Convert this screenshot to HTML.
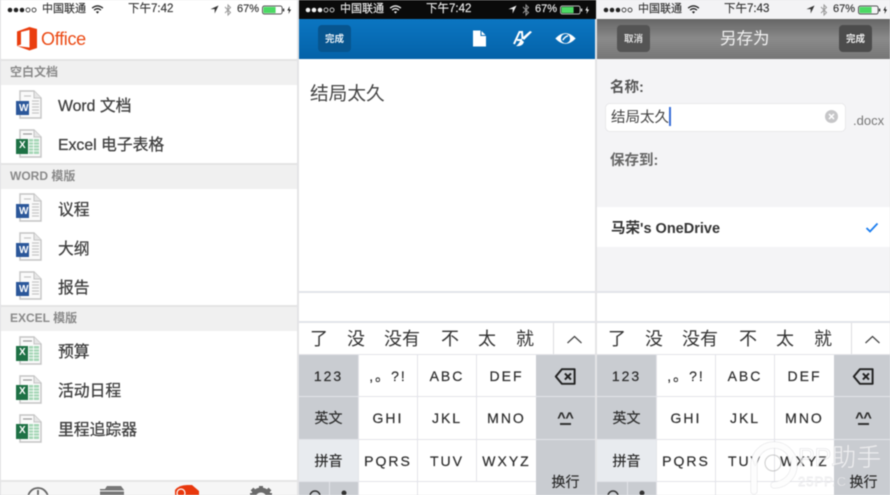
<!DOCTYPE html>
<html><head><meta charset="utf-8">
<style>
html,body{margin:0;padding:0;background:#e4e4e6}
body{width:890px;height:495px;overflow:hidden;position:relative}
#r{position:absolute;left:0;top:0;width:890px;height:495px;overflow:hidden;filter:blur(.45px);font-family:"Liberation Sans","Noto Sans CJK SC",sans-serif;color:#3c3c3c}
#r div,#r span.a,#r svg.a{position:absolute}
.t{white-space:nowrap;line-height:1}
.sec{left:1px;width:296px;height:24px;background:#f0f0f0;border-top:2px solid #e4e4e4}
.sl{left:10px;font-size:12px;color:#8a8a8a;font-weight:bold}
.it{left:58px;font-size:15.8px;color:#3e3e3e;-webkit-text-stroke:.25px #3e3e3e}
.k{background:#fff;text-align:center;font-size:14px;color:#2c2c2c;letter-spacing:2px;white-space:nowrap;-webkit-text-stroke:.2px #2c2c2c}
.g{background:#c9ccd1}
.c{top:330px;font-size:18px;color:#333;line-height:1;white-space:nowrap}
.st{font-size:11px;line-height:1;white-space:nowrap;color:#333;-webkit-text-stroke:.15px currentColor}
.btn{border-radius:4px;font-size:9.5px;font-weight:bold;text-align:center;line-height:29px;white-space:nowrap}
</style></head><body><div id="r">

<svg width="0" height="0" style="position:absolute"><defs>
<symbol id="wd" viewBox="0 0 27 30">
<path d="M4 1H18L25 8V28H4Z" fill="#fafafa" stroke="#c4c4c4" stroke-width="1.4"/><path d="M18 1V8H25" fill="#e6e6e6" stroke="#c4c4c4"/>
<path d="M16 11h7M16 14h7M16 17h7M16 20h7M16 23h7M8 6h7" stroke="#c8c8c8" stroke-width="1.2"/>
<rect x="0" y="11" width="13" height="14" fill="#2b579a"/>
</symbol>
<symbol id="xl" viewBox="0 0 27 30">
<path d="M4 1H18L25 8V28H4Z" fill="#fafafa" stroke="#c4c4c4" stroke-width="1.4"/><path d="M18 1V8H25" fill="#e6e6e6" stroke="#c4c4c4"/>
<path d="M7 5h9" stroke="#999" stroke-width="1.2"/>
<path d="M13 10h10v15h-10z" fill="#a5d6b6"/><path d="M13 13h10M13 16h10M13 19h10M13 22h10M17.5 10v15" stroke="#fff" stroke-width=".8"/>
<rect x="0" y="10" width="12" height="15" fill="#1e7145"/>
</symbol>
<symbol id="sig" viewBox="0 0 30 10"><circle cx="3" cy="5" r="2.3" fill="currentColor"/><circle cx="9" cy="5" r="2.3" fill="currentColor"/><circle cx="15" cy="5" r="2.3" fill="currentColor"/><circle cx="21" cy="5" r="2" fill="none" stroke="currentColor" stroke-width=".8"/><circle cx="27" cy="5" r="2" fill="none" stroke="currentColor" stroke-width=".8"/></symbol>
<symbol id="wifi" viewBox="0 0 14 10"><path d="M1 3.5Q7-1.5 13 3.5M3.2 5.7Q7 2.6 10.8 5.7" fill="none" stroke="currentColor" stroke-width="1.5"/><path d="M5.3 7.6Q7 6.2 8.7 7.6L7 9.6Z" fill="currentColor"/></symbol>
<symbol id="loc" viewBox="0 0 10 10"><path d="M9.5.5L.5 4.6H5.2V9.4Z" fill="currentColor"/></symbol>
<symbol id="bt" viewBox="0 0 8 12"><path d="M1 3L6.5 8.5 4 11V1L6.5 3.5 1 9" fill="none" stroke="#999" stroke-width="1"/></symbol>
<symbol id="bat" viewBox="0 0 32 10"><rect x=".5" y=".7" width="21" height="8.6" rx="2" fill="none" stroke="currentColor" stroke-width=".8"/><rect x="1.5" y="1.7" width="13" height="6.6" fill="#4cd964"/><rect x="22.3" y="3.5" width="1.4" height="3" fill="currentColor"/><path d="M29.5.8L27 5.5H28.8L28.2 9.2 31 4.4H29.2Z" fill="currentColor"/></symbol>
<symbol id="cb" viewBox="0 0 18 14"><path d="M6 1H16.5V13H6L1 7Z" fill="none" stroke="#222" stroke-width="1.6" stroke-linejoin="round"/><path d="M8.5 4.5L13.5 9.5M13.5 4.5L8.5 9.5" stroke="#222" stroke-width="1.6"/></symbol>
</defs></svg>

<!-- Panel 1 -->
<div style="left:1px;top:0;width:296px;height:495px;background:#fff"></div>
<svg class="a" style="left:7px;top:5px;color:#222" width="30" height="10"><use href="#sig"/></svg>
<div class="st t" style="left:42px;top:4px">中国联通</div>
<svg class="a" style="left:91px;top:5px;color:#222" width="13" height="9"><use href="#wifi"/></svg>
<div class="st t" style="left:128px;top:4px;font-size:11.5px">下午7:42</div>
<svg class="a" style="left:210px;top:5px;color:#333" width="9" height="9"><use href="#loc"/></svg>
<svg class="a" style="left:224px;top:4px" width="8" height="12"><use href="#bt"/></svg>
<div class="st t" style="left:237px;top:4px">67%</div>
<svg class="a" style="left:262px;top:5px;color:#222" width="30" height="10"><use href="#bat"/></svg>
<svg class="a" style="left:16px;top:26px" width="22" height="25" viewBox="0 0 22 25"><path d="M1 5.5L13.5 1 21 3V22L13.5 24.5 1 20V5.5ZM13.5 4L5 6V18.5L1 20 13.5 21.5Z" fill="#ea3e0f" fill-rule="evenodd"/><path d="M5 6L13.5 4V21.5L5 18.5Z" fill="#fff"/></svg>
<div class="t" style="left:41px;top:30px;font-size:18px;color:#eb4a14;letter-spacing:-.3px">Office</div>

<div class="sec" style="top:59px"></div><div class="t sl" style="top:66px">空白文档</div>
<svg class="a" style="left:16px;top:90px" width="27" height="30"><use href="#wd"/></svg>
<div class="t" style="left:19px;top:104px;font-size:10px;font-weight:bold;color:#fff">W</div>
<div class="t it" style="top:99px">Word 文档</div>
<svg class="a" style="left:16px;top:129px" width="27" height="30"><use href="#xl"/></svg>
<div class="t" style="left:19px;top:141px;font-size:10px;font-weight:bold;color:#fff">X</div>
<div class="t it" style="top:138px">Excel 电子表格</div>

<div class="sec" style="top:163px"></div><div class="t sl" style="top:170px">WORD 模版</div>
<svg class="a" style="left:16px;top:193px" width="27" height="30"><use href="#wd"/></svg>
<div class="t" style="left:19px;top:207px;font-size:10px;font-weight:bold;color:#fff">W</div>
<div class="t it" style="top:203px">议程</div>
<svg class="a" style="left:16px;top:232px" width="27" height="30"><use href="#wd"/></svg>
<div class="t" style="left:19px;top:246px;font-size:10px;font-weight:bold;color:#fff">W</div>
<div class="t it" style="top:242px">大纲</div>
<svg class="a" style="left:16px;top:271px" width="27" height="30"><use href="#wd"/></svg>
<div class="t" style="left:19px;top:285px;font-size:10px;font-weight:bold;color:#fff">W</div>
<div class="t it" style="top:281px">报告</div>

<div class="sec" style="top:305px"></div><div class="t sl" style="top:312px">EXCEL 模版</div>
<svg class="a" style="left:16px;top:336px" width="27" height="30"><use href="#xl"/></svg>
<div class="t" style="left:19px;top:348px;font-size:10px;font-weight:bold;color:#fff">X</div>
<div class="t it" style="top:345px">预算</div>
<svg class="a" style="left:16px;top:375px" width="27" height="30"><use href="#xl"/></svg>
<div class="t" style="left:19px;top:387px;font-size:10px;font-weight:bold;color:#fff">X</div>
<div class="t it" style="top:384px">活动日程</div>
<svg class="a" style="left:16px;top:414px" width="27" height="30"><use href="#xl"/></svg>
<div class="t" style="left:19px;top:426px;font-size:10px;font-weight:bold;color:#fff">X</div>
<div class="t it" style="top:423px">里程追踪器</div>

<div style="left:1px;top:480px;width:296px;height:15px;background:#f6f6f6;border-top:2px solid #e6e6e6;box-sizing:border-box"></div>
<svg class="a" style="left:0;top:484px" width="297" height="11" viewBox="0 0 297 11">
<circle cx="38" cy="14" r="10" fill="none" stroke="#666" stroke-width="1.8"/><path d="M38 6V14" stroke="#666" stroke-width="1.8"/>
<path d="M100 11V5H105L107 2H121L124 6V11Z" fill="#777"/><path d="M100 7H124" stroke="#f6f6f6"/>
<path d="M175 11V6Q179 1 187 1L192 1 199 7V11Z" fill="#e8380d"/><circle cx="181" cy="9" r="4" fill="#e8380d" stroke="#fff" stroke-width="1.2"/>
<circle cx="261" cy="14" r="8" fill="none" stroke="#6b6b6b" stroke-width="5"/><path d="M261 2V6M252 5L255 8M270 5L267 8M250 11H254M272 11H268" stroke="#6b6b6b" stroke-width="4"/>
</svg>

<!-- Panel 2 -->
<div style="left:299px;top:0;width:297px;height:19px;background:#0a0a0a"></div>
<div style="left:299px;top:19px;width:296px;height:40px;background:linear-gradient(#0b76c2,#0462a8)"></div>
<div style="left:299px;top:59px;width:296px;height:436px;background:#fff"></div>
<svg class="a" style="left:305px;top:5px;color:#f2f2f2" width="30" height="10"><use href="#sig"/></svg>
<div class="st t" style="left:340px;top:4px;color:#eee">中国联通</div>
<svg class="a" style="left:389px;top:5px;color:#eee" width="13" height="9"><use href="#wifi"/></svg>
<div class="st t" style="left:426px;top:4px;font-size:11.5px;color:#eee">下午7:42</div>
<svg class="a" style="left:508px;top:5px;color:#eee" width="9" height="9"><use href="#loc"/></svg>
<svg class="a" style="left:522px;top:4px" width="8" height="12"><use href="#bt"/></svg>
<div class="st t" style="left:535px;top:4px;color:#eee">67%</div>
<svg class="a" style="left:560px;top:5px;color:#eee" width="30" height="10"><use href="#bat"/></svg>
<div class="btn" style="left:318px;top:25px;width:33px;height:27px;background:#07558f;color:#e8f0f6">完成</div>
<svg class="a" style="left:472px;top:30px" width="15" height="17" viewBox="0 0 15 17"><path d="M1 0.5H9L14 5.5V16.5H1Z" fill="#fff"/><path d="M9 .5V5.5H14" fill="none" stroke="#0a6cb5"/></svg>
<svg class="a" style="left:513px;top:30px" width="20" height="17" viewBox="0 0 20 17"><path d="M1 14L6.500 2H9L9.500 9M4 10H9" fill="none" stroke="#fff" stroke-width="2"/><path d="M19 2L11 10 9 8 17 1Z" fill="#fff"/><path d="M8 9L11 12Q9 17 3 16Q6 14 8 9Z" fill="#fff"/></svg>
<svg class="a" style="left:554px;top:31px" width="23" height="15" viewBox="0 0 21 14"><path d="M1 7Q10.500-3 20 7Q10.500 17 1 7Z" fill="#fff"/><circle cx="10.500" cy="7" r="4.300" fill="#0a6cb5"/><path d="M8 8.500Q10 5 13 4.500" stroke="#fff" stroke-width="1.400" fill="none"/></svg>
<div class="t" style="left:310px;top:85px;font-size:18.700px;color:#444">结局太久</div>

<!-- Panel 3 -->
<div style="left:597px;top:0;width:293px;height:19px;background:#f3f3f5"></div>
<div style="left:597px;top:19px;width:293px;height:40px;background:linear-gradient(#666,#8a8a8a 50%,#767676)"></div>
<div style="left:597px;top:59px;width:293px;height:436px;background:#f4f4f6"></div>
<svg class="a" style="left:603px;top:5px;color:#222" width="30" height="10"><use href="#sig"/></svg>
<div class="st t" style="left:638px;top:4px">中国联通</div>
<svg class="a" style="left:687px;top:5px;color:#222" width="13" height="9"><use href="#wifi"/></svg>
<div class="st t" style="left:724px;top:4px;font-size:11.5px">下午7:43</div>
<svg class="a" style="left:806px;top:5px;color:#333" width="9" height="9"><use href="#loc"/></svg>
<svg class="a" style="left:820px;top:4px" width="8" height="12"><use href="#bt"/></svg>
<div class="st t" style="left:833px;top:4px">67%</div>
<svg class="a" style="left:858px;top:5px;color:#222" width="30" height="10"><use href="#bat"/></svg>
<div class="btn" style="left:617px;top:25px;width:33px;height:27px;background:#545454;color:#ddd">取消</div>
<div class="btn" style="left:839px;top:25px;width:33px;height:27px;background:#4c4c4c;color:#eee">完成</div>
<div class="t" style="left:720px;top:31px;font-size:16.500px;color:#f2f2f2">另存为</div>
<div class="t" style="left:610px;top:81px;font-size:14.500px;font-weight:bold;color:#555">名称:</div>
<div style="left:605px;top:103px;width:239px;height:27px;background:#fff;border:1px solid #e8e8ea;border-radius:5px"></div>
<div class="t" style="left:611px;top:111px;font-size:14.500px;color:#444">结局太久</div>
<div style="left:669px;top:107px;width:1.500px;height:19px;background:#3a6fd8"></div>
<svg class="a" style="left:825px;top:110px" width="13" height="13" viewBox="0 0 13 13"><circle cx="6.500" cy="6.500" r="6.500" fill="#c6c6c8"/><path d="M4 4L9 9M9 4L4 9" stroke="#fff" stroke-width="1.500"/></svg>
<div class="t" style="left:853px;top:114px;font-size:13px;color:#777">.docx</div>
<div class="t" style="left:610px;top:154px;font-size:14.500px;font-weight:bold;color:#666">保存到:</div>
<div style="left:597px;top:207px;width:293px;height:40px;background:#fff"></div>
<div class="t" style="left:611px;top:222px;font-size:14.500px;font-weight:bold;color:#333">马荣's OneDrive</div>
<svg class="a" style="left:865px;top:222px" width="14" height="11" viewBox="0 0 14 11"><path d="M1.500 6L5 9.500 12.500 1.500" fill="none" stroke="#1a7df0" stroke-width="1.800"/></svg>

<!-- Keyboard 2 -->
<div style="left:299px;top:291px;width:296px;height:204px;background:#e3e4e9"></div>
<div style="left:299px;top:293px;width:296px;height:28px;background:#fff"></div>
<div style="left:299px;top:323px;width:296px;height:31px;background:#fff"></div>
<div style="left:553px;top:323px;width:1px;height:31px;background:#dcdde1"></div>
<div class="c" style="left:310px">了</div><div class="c" style="left:347px">没</div><div class="c" style="left:384px">没有</div><div class="c" style="left:441px">不</div><div class="c" style="left:478px">太</div><div class="c" style="left:516px">就</div>
<svg class="a" style="left:566px;top:335px" width="17" height="9" viewBox="0 0 17 9"><path d="M1.500 8L8.500 1.500 15.500 8" fill="none" stroke="#444" stroke-width="1.200"/></svg>
<div class="k g" style="left:299px;top:355px;width:59px;height:41px;line-height:43px">123</div>
<div class="k" style="left:359px;top:355px;width:58px;height:41px;line-height:43px">,。?!</div>
<div class="k" style="left:418px;top:355px;width:58px;height:41px;line-height:43px">ABC</div>
<div class="k" style="left:477px;top:355px;width:59px;height:41px;line-height:43px">DEF</div>
<div class="k g" style="left:536px;top:355px;width:59px;height:41px"></div>
<svg class="a" style="left:554px;top:368px" width="23" height="17" viewBox="0 0 18 14"><use href="#cb"/></svg>
<div class="k g" style="left:299px;top:397px;width:59px;height:42px;line-height:42px;letter-spacing:0">英文</div>
<div class="k" style="left:359px;top:397px;width:58px;height:42px;line-height:42px">GHI</div>
<div class="k" style="left:418px;top:397px;width:58px;height:42px;line-height:42px">JKL</div>
<div class="k" style="left:477px;top:397px;width:59px;height:42px;line-height:42px">MNO</div>
<div class="k g" style="left:536px;top:397px;width:59px;height:42px;line-height:40px;letter-spacing:0;font-weight:bold">^^<span style="position:absolute;left:24px;top:26px;width:11px;height:1.500px;background:#333"></span></div>
<div class="k" style="left:299px;top:440px;width:59px;height:41px;line-height:42px;letter-spacing:0;background:#e8ebef">拼音</div>
<div class="k" style="left:359px;top:440px;width:58px;height:41px;line-height:42px">PQRS</div>
<div class="k" style="left:418px;top:440px;width:58px;height:41px;line-height:42px">TUV</div>
<div class="k" style="left:477px;top:440px;width:59px;height:41px;line-height:42px">WXYZ</div>
<div class="k g" style="left:536px;top:440px;width:59px;height:55px;line-height:84px;letter-spacing:0">换行</div>
<div class="k g" style="left:299px;top:482px;width:30px;height:13px"></div>
<div class="k g" style="left:330px;top:482px;width:28px;height:13px"></div>
<div class="k" style="left:359px;top:482px;width:58px;height:13px"></div>
<div class="k" style="left:418px;top:482px;width:118px;height:13px"></div>
<svg class="a" style="left:299px;top:490px" width="60" height="5" viewBox="0 0 60 5"><circle cx="16" cy="6" r="5" fill="none" stroke="#333" stroke-width="1.500"/><circle cx="45" cy="3" r="2.500" fill="#333"/></svg>

<!-- Keyboard 3 -->
<div style="left:597px;top:291px;width:293px;height:204px;background:#e3e4e9"></div>
<div style="left:597px;top:293px;width:293px;height:28px;background:#fff"></div>
<div style="left:597px;top:323px;width:293px;height:31px;background:#fff"></div>
<div style="left:851px;top:323px;width:1px;height:31px;background:#dcdde1"></div>
<div class="c" style="left:608px">了</div><div class="c" style="left:645px">没</div><div class="c" style="left:682px">没有</div><div class="c" style="left:739px">不</div><div class="c" style="left:776px">太</div><div class="c" style="left:814px">就</div>
<svg class="a" style="left:864px;top:335px" width="17" height="9" viewBox="0 0 17 9"><path d="M1.500 8L8.500 1.500 15.500 8" fill="none" stroke="#444" stroke-width="1.200"/></svg>
<div class="k g" style="left:597px;top:355px;width:59px;height:41px;line-height:43px">123</div>
<div class="k" style="left:657px;top:355px;width:58px;height:41px;line-height:43px">,。?!</div>
<div class="k" style="left:716px;top:355px;width:58px;height:41px;line-height:43px">ABC</div>
<div class="k" style="left:775px;top:355px;width:59px;height:41px;line-height:43px">DEF</div>
<div class="k g" style="left:834px;top:355px;width:56px;height:41px"></div>
<svg class="a" style="left:852px;top:368px" width="23" height="17" viewBox="0 0 18 14"><use href="#cb"/></svg>
<div class="k g" style="left:597px;top:397px;width:59px;height:42px;line-height:42px;letter-spacing:0">英文</div>
<div class="k" style="left:657px;top:397px;width:58px;height:42px;line-height:42px">GHI</div>
<div class="k" style="left:716px;top:397px;width:58px;height:42px;line-height:42px">JKL</div>
<div class="k" style="left:775px;top:397px;width:59px;height:42px;line-height:42px">MNO</div>
<div class="k g" style="left:834px;top:397px;width:56px;height:42px;line-height:40px;letter-spacing:0;font-weight:bold;padding-left:3px;box-sizing:border-box">^^<span style="position:absolute;left:24px;top:26px;width:11px;height:1.500px;background:#333"></span></div>
<div class="k" style="left:597px;top:440px;width:59px;height:41px;line-height:42px;letter-spacing:0;background:#e8ebef">拼音</div>
<div class="k" style="left:657px;top:440px;width:58px;height:41px;line-height:42px">PQRS</div>
<div class="k" style="left:716px;top:440px;width:58px;height:41px;line-height:42px">TUV</div>
<div class="k" style="left:775px;top:440px;width:59px;height:41px;line-height:42px">WXYZ</div>
<div class="k g" style="left:834px;top:440px;width:56px;height:55px;line-height:84px;letter-spacing:0;padding-left:3px;box-sizing:border-box">换行</div>
<div class="k g" style="left:597px;top:482px;width:30px;height:13px"></div>
<div class="k g" style="left:628px;top:482px;width:28px;height:13px"></div>
<div class="k" style="left:657px;top:482px;width:58px;height:13px"></div>
<div class="k" style="left:716px;top:482px;width:118px;height:13px"></div>
<svg class="a" style="left:597px;top:490px" width="60" height="5" viewBox="0 0 60 5"><circle cx="16" cy="6" r="5" fill="none" stroke="#333" stroke-width="1.500"/><circle cx="45" cy="3" r="2.500" fill="#333"/></svg>

<!-- Watermark -->
<svg class="a" style="left:748px;top:438px" width="50" height="57" viewBox="0 0 50 57"><path d="M6 53V27A20 20 0 1 1 26 47" fill="none" stroke="#c4c4c8" stroke-opacity=".5" stroke-width="7" stroke-linecap="round"/><path d="M6 53V27A20 20 0 1 1 26 47" fill="none" stroke="#fff" stroke-opacity=".92" stroke-width="6" stroke-linecap="round"/><circle cx="25" cy="25" r="8" fill="none" stroke="#aaa" stroke-opacity=".6" stroke-width="1"/></svg>
<div class="t" style="left:798px;top:446px;font-size:25px;color:rgba(255,255,255,.65);-webkit-text-stroke:.5px rgba(190,190,195,.55)">PP助手</div>
<div class="t" style="left:798px;top:475px;font-size:13px;color:rgba(255,255,255,.6);letter-spacing:1px;-webkit-text-stroke:.4px rgba(190,190,195,.5)">25PP.C</div>
</div></body></html>
